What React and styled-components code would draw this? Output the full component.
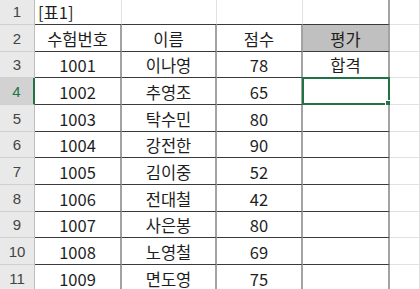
import React from "react";
import styled, { createGlobalStyle } from "styled-components";

const Global = createGlobalStyle`
  html, body { margin: 0; padding: 0; background: #fff; overflow: hidden; }
  body { font-family: "Noto Sans CJK KR", "Noto Sans", sans-serif; }
`;

const Sheet = styled.div`
  display: grid;
  grid-template-columns: 35px 87px 95px 86px 87px 1fr;
  grid-template-rows: 25px repeat(10, 26.667px);
  width: 420px;
  height: 289px;
  overflow: hidden;
`;

const RowHead = styled.div`
  box-sizing: border-box;
  display: flex;
  align-items: flex-end;
  justify-content: center;
  padding-bottom: 2px;
  background: ${(p) => (p.$active ? "#d2d2d2" : "#e9e9e9")};
  color: ${(p) => (p.$active ? "#217346" : "#444")};
  border-bottom: 1px solid #d0d0d0;
  border-right: ${(p) => (p.$active ? "2px solid #217346" : "1px solid #bdbdbd")};
  font-family: "Liberation Sans", "Noto Sans", sans-serif;
  font-size: 15px;
  line-height: 20px;
`;

const Cell = styled.div`
  box-sizing: border-box;
  position: relative;
  display: flex;
  align-items: flex-end;
  justify-content: ${(p) => (p.$left ? "flex-start" : "center")};
  padding: 0 3px 1px;
  background: ${(p) => p.$bg || "#fff"};
  color: #1e1e1e;
  font-size: 16.5px;
  line-height: 22px;
  white-space: nowrap;
  border-bottom: ${(p) => (p.$topOfTable ? "1px solid #3a3a3a" : p.$table ? "1px solid #3a3a3a" : "1px solid #e1e1e1")};
  border-right: ${(p) => (p.$table ? "2px solid #a3a3a3" : "1px solid #e1e1e1")};
`;

const Selection = styled.div`
  position: absolute;
  left: -1px;
  top: -1px;
  right: -2px;
  bottom: -1px;
  border: 2px solid #217346;
  pointer-events: none;
`;

const Handle = styled.div`
  position: absolute;
  right: -4px;
  bottom: -4px;
  width: 5px;
  height: 5px;
  background: #217346;
  border: 1px solid #fff;
`;

const Num = styled.span`
  font-family: "Noto Sans CJK KR", "Noto Sans", sans-serif;
`;

const data = [
  ["1001", "이나영", "78", "합격"],
  ["1002", "추영조", "65", ""],
  ["1003", "탁수민", "80", ""],
  ["1004", "강전한", "90", ""],
  ["1005", "김이중", "52", ""],
  ["1006", "전대철", "42", ""],
  ["1007", "사은봉", "80", ""],
  ["1008", "노영철", "69", ""],
  ["1009", "면도영", "75", ""],
];

export default function App() {
  return (
    <>
      <Global />
      <Sheet>
        <RowHead>1</RowHead>
        <Cell $left $topOfTable>[표1]</Cell>
        <Cell $topOfTable style={{ borderRight: "1px solid #e1e1e1" }} />
        <Cell $topOfTable style={{ borderRight: "1px solid #e1e1e1" }} />
        <Cell $topOfTable style={{ borderRight: "2px solid #a3a3a3" }} />
        <Cell />

        <RowHead>2</RowHead>
        <Cell $table>수험번호</Cell>
        <Cell $table>이름</Cell>
        <Cell $table>점수</Cell>
        <Cell $table $bg="#c0c0c0">평가</Cell>
        <Cell />

        {data.map((r, i) => {
          const rowNo = i + 3;
          const active = rowNo === 4;
          return (
            <React.Fragment key={rowNo}>
              <RowHead $active={active}>{rowNo}</RowHead>
              <Cell $table><Num>{r[0]}</Num></Cell>
              <Cell $table>{r[1]}</Cell>
              <Cell $table><Num>{r[2]}</Num></Cell>
              <Cell $table>
                {r[3]}
                {active && (
                  <Selection>
                    <Handle />
                  </Selection>
                )}
              </Cell>
              <Cell />
            </React.Fragment>
          );
        })}
      </Sheet>
    </>
  );
}
